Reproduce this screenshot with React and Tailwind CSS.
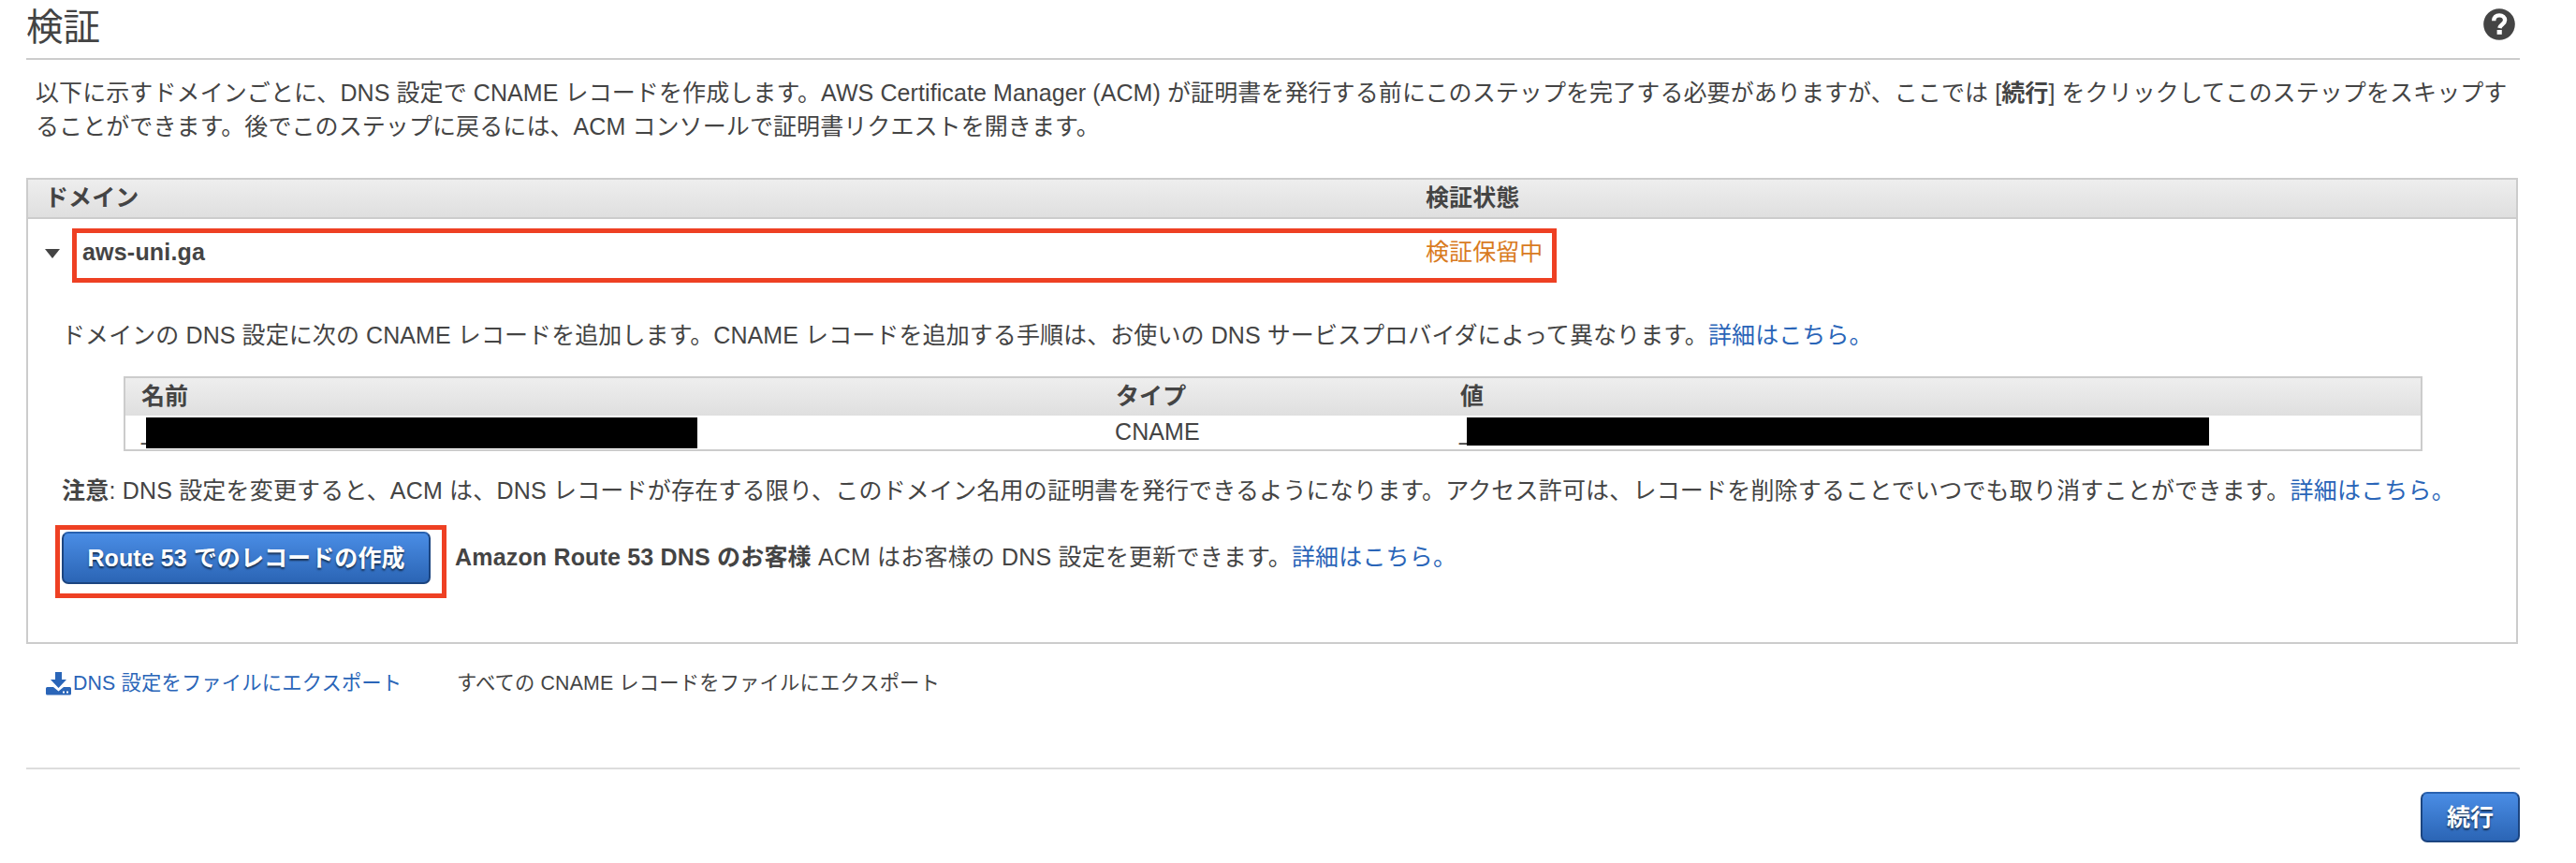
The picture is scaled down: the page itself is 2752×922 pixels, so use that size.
const LearnMore = () => (
  <a href="#" className="text-[#2a65b8]">
    詳細はこちら。
  </a>
);

const HelpIcon = () => (
  <svg className="w-[34px] h-[34px]" viewBox="0 0 34 34">
    <circle cx="17" cy="17" r="16.8" fill="#444" />
    <path
      d="M11.2 13.2C11.2 9.6 13.6 7.4 17.1 7.4C20.6 7.4 23.1 9.6 23.1 12.6C23.1 16.6 18 17 17.3 21"
      fill="none"
      stroke="#fff"
      strokeWidth="4.4"
    />
    <path d="M14.6 23h5.2v4.8h-5.2z" fill="#fff" />
  </svg>
);

const DownloadIcon = () => (
  <svg className="w-[27px] h-[25px]" viewBox="0 0 27 25" fill="#2a65b8">
    <path d="M10 0h7v8h5l-8.500 9L5 8h5z" />
    <path
      fillRule="evenodd"
      d="M1.500 16H8l5.500 4.500L19 16h6.500a1.500 1.500 0 0 1 1.500 1.500v5.500a1.500 1.500 0 0 1-1.500 1.500h-24a1.500 1.500 0 0 1-1.500-1.500v-5.500a1.500 1.500 0 0 1 1.500-1.500zM18 20.500v2h2v-2zM22 20.500v2h2v-2z"
    />
  </svg>
);

const PrimaryButton = ({ children, className }) => (
  <button
    className={`flex items-center justify-center rounded-[7px] border-2 border-[#1c4580] border-t-[#2861b0] bg-linear-to-b from-[#4a8de5] to-[#2b65b5] font-bold text-white [text-shadow:0_2px_2px_rgba(0,0,0,0.6)] ${className}`}
  >
    {children}
  </button>
);

const App = () => {
  return (
    <div className="h-[922px] w-[2752px] overflow-hidden bg-white pl-7 font-['Liberation_Sans','Noto_Sans_CJK_JP',sans-serif] text-[25px] leading-[36px] tracking-[0.09px] whitespace-nowrap text-[#444]">
      {/* Title */}
      <header className="flex h-16 w-[2664px] items-start justify-between border-b-2 border-[#ccc] pr-[5px]">
        <h1 className="text-[39.5px] leading-[59px]">検証</h1>
        <div className="pt-[9px]">
          <HelpIcon />
        </div>
      </header>

      {/* Intro */}
      <p className="h-[126px] pt-[17px] pl-[10px]">
        以下に示すドメインごとに、DNS 設定で CNAME レコードを作成します。AWS Certificate Manager (ACM)
        が証明書を発行する前にこのステップを完了する必要がありますが、ここでは [<b>続行</b>]
        をクリックしてこのステップをスキップす
        <br />
        ることができます。後でこのステップに戻るには、ACM コンソールで証明書リクエストを開きます。
      </p>

      {/* Domains */}
      <section className="h-[498px] w-[2662px] border-2 border-[#ccc]">
        <div className="flex h-[42px] border-b-2 border-[#ccc] bg-linear-to-b from-[#eee] to-[#dfdfdf] pl-[18px] font-bold">
          <div className="w-[1475px] pt-px">ドメイン</div>
          <div className="pt-px">検証状態</div>
        </div>

        <div className="relative flex h-[88px] items-start pt-[17px] pl-[18px]">
          <svg className="mt-[15px] h-[10px] w-4" viewBox="0 0 16 10">
            <path d="M0 0h16L8 10z" fill="#444" />
          </svg>
          <div className="w-[1435px] pl-6 font-bold tracking-[0.2px]">aws-uni.ga</div>
          <div className="pl-6 text-[#d97b1f]">検証保留中</div>
          <div className="absolute top-[10px] left-[47px] h-[58px] w-[1586px] border-5 border-[#ee4023]" />
        </div>

        <div className="pl-9">
          <p className="h-[80px] pt-[18px]">
            ドメインの DNS 設定に次の CNAME レコードを追加します。CNAME
            レコードを追加する手順は、お使いの DNS サービスプロバイダによって異なります。
            <LearnMore />
          </p>

          <div className="ml-[66px] h-[80px] w-[2456px] border-2 border-[#ccc]">
            <div className="flex h-10 bg-linear-to-b from-[#eee] to-[#dfdfdf] pt-px pl-[17px] font-bold">
              <div className="w-[1041px]">名前</div>
              <div className="w-[368px]">タイプ</div>
              <div>値</div>
            </div>
            <div className="flex h-9 items-start pl-[17px] leading-[34px]">
              <div className="relative w-[1040px]">
                _
                <span className="absolute top-[2px] left-[5px] h-[33px] w-[589px] bg-black" />
              </div>
              <div className="w-[368px]">CNAME</div>
              <div className="relative">
                _
                <span className="absolute top-[2px] left-[8px] h-[30px] w-[793px] bg-black" />
              </div>
            </div>
          </div>

          <p className="h-[86px] pt-[24px] tracking-[0.19px]">
            <b>注意</b>: DNS 設定を変更すると、ACM は、DNS
            レコードが存在する限り、このドメイン名用の証明書を発行できるようになります。アクセス許可は、レコードを削除することでいつでも取り消すことができます。
            <LearnMore />
          </p>

          <div className="relative flex h-14 items-start">
            <PrimaryButton className="h-14 w-[394px]">Route 53 でのレコードの作成</PrimaryButton>
            <p className="pt-[9px] pl-[26px] tracking-[0.18px]">
              <b>Amazon Route 53 DNS のお客様</b> ACM はお客様の DNS 設定を更新できます。
              <LearnMore />
            </p>
            <div className="absolute top-[-7px] left-[-7px] h-[78px] w-[418px] border-5 border-[#ee4023]" />
          </div>
        </div>
      </section>

      {/* Export */}
      <div className="flex h-[132px] items-start pt-[24px] pl-[21px] text-[21.3px] tracking-[0.16px]">
        <div className="mt-[6px]">
          <DownloadIcon />
        </div>
        <a href="#" className="w-[412px] pl-[2px] text-[#2a65b8]">
          DNS 設定をファイルにエクスポート
        </a>
        <p>すべての CNAME レコードをファイルにエクスポート</p>
      </div>

      <footer className="flex w-[2664px] justify-end border-t-2 border-[#ddd] pt-6">
        <PrimaryButton className="h-[54px] w-[106px]">続行</PrimaryButton>
      </footer>
    </div>
  );
};

export default App;
